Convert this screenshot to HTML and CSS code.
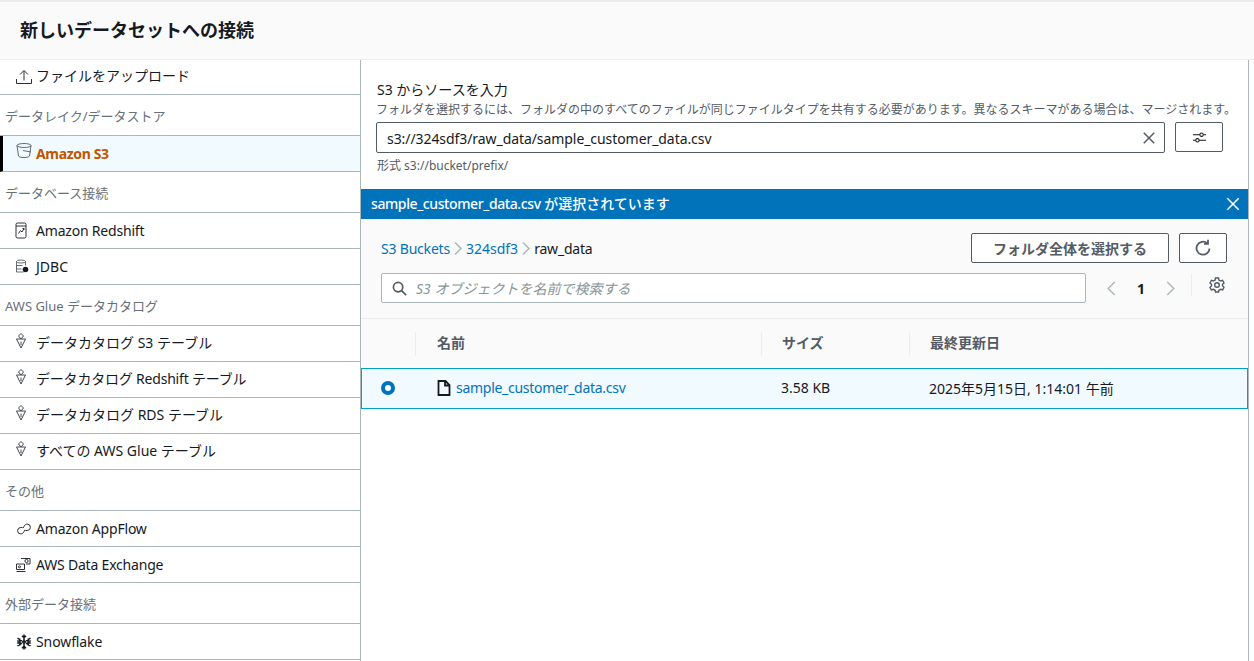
FILE: index.html
```html
<!DOCTYPE html>
<html lang="ja">
<head>
<meta charset="utf-8">
<title>新しいデータセットへの接続</title>
<link rel="stylesheet" href="styles.css">
</head>
<body>
<header class="top"><h1>新しいデータセットへの接続</h1></header>
<div class="layout">
  <nav class="side">
    <div class="item first"><svg class="ic" viewBox="0 0 16 16"><path d="M0.500 10v4.500h15V10M8 11.500V2M4 5.500L8 1.500l4 4"/></svg><span class="jp">ファイルをアップロード</span></div>
    <div class="head">データレイク/データストア</div>
    <div class="item active"><svg class="ic up" viewBox="0 0 16 16"><ellipse cx="8" cy="2.500" rx="7" ry="2"/><path d="M1 2.500l1.500 10.500c.5 1 2.500 1.500 5.500 1.500s5-.5 5.500-1.500L15 2.500M7 7.500l8 1.500"/></svg><span class="lat-b">Amazon S3</span></div>
    <div class="head">データベース接続</div>
    <div class="item"><svg class="ic" viewBox="0 0 16 16"><rect x="0" y="0" width="10" height="15" rx="1.500"/><path d="M0 3h10M2.500 10.500l2-3 1.500 1.500L8 5.500M6.500 5.500H8V7"/></svg><span class="lat">Amazon Redshift</span></div>
    <div class="item"><svg class="ic jd" viewBox="0 0 16 16"><ellipse cx="5" cy="2.500" rx="4.500" ry="1.500"/><path d="M.5 2.500v10.500h7M9.500 2.500v4M.5 6.500h6M.5 10h5"/><circle cx="9.500" cy="10.500" r="2.800" class="solid"/></svg><span>JDBC</span></div>
    <div class="head">AWS Glue データカタログ</div>
    <div class="item"><svg class="ic up gl" viewBox="0 0 16 16"><path d="M.5 6h9L5 15zM5 .5L7.500 3 5 6 2.500 3zM5 8.500v3.500"/></svg><span class="jp2">データカタログ S3 テーブル</span></div>
    <div class="item"><svg class="ic up gl" viewBox="0 0 16 16"><path d="M.5 6h9L5 15zM5 .5L7.500 3 5 6 2.500 3zM5 8.500v3.500"/></svg><span class="jp2 lat">データカタログ Redshift テーブル</span></div>
    <div class="item"><svg class="ic up gl" viewBox="0 0 16 16"><path d="M.5 6h9L5 15zM5 .5L7.500 3 5 6 2.500 3zM5 8.500v3.500"/></svg><span class="jp2">データカタログ RDS テーブル</span></div>
    <div class="item"><svg class="ic up gl" viewBox="0 0 16 16"><path d="M.5 6h9L5 15zM5 .5L7.500 3 5 6 2.500 3zM5 8.500v3.500"/></svg><span class="jp2">すべての AWS Glue テーブル</span></div>
    <div class="head">その他</div>
    <div class="item"><svg class="ic" viewBox="0 0 16 16"><path d="M6.500 6.500H4.800a3.200 3.200 0 0 0 0 6.400c1.400 0 2.300-.7 2.800-1.700L9 8.800M9.500 9.500h1.700a3.200 3.200 0 0 0 0-6.400c-1.400 0-2.300.7-2.800 1.700L7 7.200"/></svg><span class="lat">Amazon AppFlow</span></div>
    <div class="item"><svg class="ic" viewBox="0 0 16 16"><path d="M.5 14.500h9M.5 7h8v5.500h-8z"/><circle cx="3.500" cy="9.800" r="1"/><path d="M5 1.500h9v5.500h-4"/><circle cx="10.500" cy="4" r="1.600"/></svg><span class="lat">AWS Data Exchange</span></div>
    <div class="head">外部データ接続</div>
    <div class="item"><svg class="ic bold" viewBox="0 0 16 16"><path d="M8 .5V6M8 10v5.500M1.500 4.200L6 6.900M10 9.100l4.500 2.700M14.500 4.200L10 6.900M6 9.100l-4.500 2.700M6 1.800l2 2 2-2M6 14.200l2-2 2 2M1.200 7L4 7.200 3.500 4.500M14.800 7L12 7.200l.5-2.700M1.200 9L4 8.800l-.5 2.700M14.800 9L12 8.800l.5 2.700"/><path d="M8 6.500L9.500 8 8 9.500 6.500 8z"/></svg><span class="snow">Snowflake</span></div>
  </nav>
  <main class="main">
    <section class="source">
      <div class="label">S3 からソースを入力</div>
      <div class="hint">フォルダを選択するには、フォルダの中のすべてのファイルが同じファイルタイプを共有する必要があります。異なるスキーマがある場合は、マージされます。</div>
      <div class="input-row">
        <div class="field"><span class="path">s3://324sdf3/raw_data/sample_customer_data.csv</span><svg class="x" viewBox="0 0 16 16"><path d="M2 2l12 12M14 2L2 14"/></svg></div>
        <div class="cfg"><svg viewBox="0 0 16 16"><path d="M1 5h7.500M12 5h3M1 11h3M7.500 11H15"/><circle cx="10.200" cy="5" r="1.800"/><circle cx="5.800" cy="11" r="1.800"/></svg></div>
      </div>
      <div class="format">形式 s3://bucket/prefix/</div>
    </section>
    <div class="banner"><span><span class="lat-m">sample_customer_data.csv</span> が選択されています</span><svg viewBox="0 0 16 16"><path d="M1.500 1.500l13 13M14.500 1.500l-13 13"/></svg></div>
    <section class="browser">
      <div class="crumb-row">
        <div class="crumbs"><a class="lat">S3 Buckets</a><svg viewBox="0 0 8 13"><path d="M1 .5l6 6-6 6"/></svg><a>324sdf3</a><svg viewBox="0 0 8 13"><path d="M1 .5l6 6-6 6"/></svg><span class="lat">raw_data</span></div>
        <div class="btn">フォルダ全体を選択する</div>
        <div class="btn refresh"><svg viewBox="0 0 18 18"><path d="M15.500 9.500A6.500 6.500 0 1 1 13.200 4.200M14 .8v4H10"/></svg></div>
      </div>
      <div class="search-row">
        <div class="search"><svg viewBox="0 0 16 16"><circle cx="6.500" cy="6.500" r="5"/><path d="M10 10l5 5"/></svg><span>S3 オブジェクトを名前で検索する</span></div>
        <div class="pager">
          <svg viewBox="0 0 10 16"><path d="M9 1L2 8l7 7"/></svg>
          <b>1</b>
          <svg viewBox="0 0 10 16"><path d="M1 1l7 7-7 7"/></svg>
        </div>
        <div class="gear"><svg viewBox="0 0 16 16"><circle cx="8" cy="8" r="2.300"/><path d="M6.500 1h3l.4 2 1.700 1 2-.7 1.400 2.700-1.500 1.300v1.400L15 10.300 13.600 13l-2-.7-1.700 1-.4 1.700h-3l-.4-1.700-1.700-1-2 .7L1 10.300l1.500-1.300V7.300L1 6l1.400-2.700 2 .7 1.700-1z"/></svg></div>
      </div>
    </section>
    <div class="thead">
      <div class="cell sel"></div>
      <div class="cell name">名前</div>
      <div class="cell size">サイズ</div>
      <div class="cell date">最終更新日</div>
    </div>
    <div class="trow">
      <div class="tsel"><i class="radio"></i></div>
      <div class="tname"><svg viewBox="0 0 16 16"><path d="M2.500 1h7L13.500 5v10h-11zM9 1v4.500h4.500"/></svg><a class="lat-f">sample_customer_data.csv</a></div>
      <div class="tsize">3.58 KB</div>
      <div class="tdate">2025年5月15日, 1:14:01 午前</div>
    </div>
  </main>
</div>
</body>
</html>
```
FILE: styles.css
```css
* { box-sizing: border-box; }
html, body { margin: 0; height: 661px; overflow: hidden; background: #fff; }
body { font-family: "Noto Sans", "Noto Sans CJK JP", sans-serif; font-size: 14px; color: #16191f; }
svg { fill: none; stroke: currentColor; flex: none; display: block; overflow: visible; }

.top { height: 60px; background: #fafafa; border-top: 2px solid #eaeded; border-bottom: 1px solid #eaeded; display: flex; align-items: center; padding: 0 20px 2px; }
.top h1 { margin: 0; font-size: 18px; font-weight: 700; line-height: 24px; color: #16191f; }

.lat { letter-spacing: -0.2px; }
.lat-f { letter-spacing: -0.28px; }
.lat-m { letter-spacing: -0.4px; }
.lat-b { letter-spacing: -0.35px; }
.snow { letter-spacing: -0.1px; }
.path { letter-spacing: -0.07px; padding-top: 2px; }
.jp { padding-bottom: 2px; }
.jp2 { padding-bottom: 1px; }

.layout { display: flex; height: 601px; }
.side { width: 361px; flex: none; border-right: 1px solid #aab7b8; }
.item { height: 36px; border-bottom: 1px solid #aab7b8; display: flex; align-items: center; gap: 4px; padding-left: 16px; line-height: 20px; }
.item.first { height: 35px; }
.ic { width: 16px; height: 16px; stroke-width: 0.900; color: #16191f; }
.ic.up { transform: translateY(-3px); }
.ic.gl { color: #414750; stroke-width: 1; }
.ic.jd { color: #545b64; }
.ic.bold { stroke-width: 1.500; }
.solid { fill: #16191f; stroke: none; }
.head { height: 41px; border-bottom: 1px solid #aab7b8; display: flex; align-items: center; padding-left: 5px; font-size: 13px; color: #687078; }
.active { background: #f1faff; border-left: 3px solid #000; padding-left: 13px; color: #c05600; font-weight: 700; }
.active .ic { color: #545b64; }

.main { flex: none; width: 888px; border-right: 1px solid #aab7b8; }
.source { height: 129px; padding: 20px 16px 0 15px; }
.label { line-height: 20px; font-size: 14px; padding-left: 1px; }
.hint { font-size: 12px; line-height: 16px; color: #545b64; white-space: nowrap; margin-top: 2px; }
.input-row { display: flex; margin-top: 4px; gap: 10px; }
.field { width: 789px; height: 31px; border: 1px solid #545b64; border-radius: 2px; display: flex; align-items: center; justify-content: space-between; padding: 0 8px 0 10px; }
.x { width: 14px; height: 14px; stroke-width: 1.700; color: #545b64; }
.cfg { width: 48px; height: 30px; border: 1px solid #545b64; border-radius: 2px; display: flex; align-items: center; justify-content: center; }
.cfg svg { width: 15px; height: 15px; stroke-width: 1.100; }
.format { font-size: 12px; line-height: 16px; color: #545b64; margin-top: 5px; padding-left: 1px; }

.banner { height: 30px; background: #0073bb; color: #fff; display: flex; align-items: center; justify-content: space-between; padding: 0 8px 2px 10px; font-size: 14px; font-weight: 500; }
.banner svg { width: 14px; height: 14px; stroke-width: 1.800; margin-top: 2px; }

.browser { height: 100px; background: #fafafa; border-bottom: 1px solid #eaeded; padding: 14px 21px 0 20px; }
.crumb-row { display: flex; align-items: center; height: 30px; }
.crumbs { flex: 1; display: flex; align-items: center; gap: 4px; }
.crumbs a { color: #0073bb; }
.crumbs svg { width: 8px; height: 13px; color: #aab7b8; stroke-width: 1.500; }
.btn { height: 30px; width: 198px; border: 1px solid #545b64; border-radius: 2px; background: #fff; display: flex; align-items: center; justify-content: center; font-weight: 700; color: #545b64; }
.refresh { width: 48px; margin-left: 10px; }
.refresh svg { width: 18px; height: 18px; stroke-width: 1.800; }
.search-row { display: flex; align-items: center; margin-top: 10px; height: 30px; }
.search { width: 705px; height: 30px; border: 1px solid #aab7b8; border-radius: 2px; background: #fff; display: flex; align-items: center; gap: 9px; padding-left: 10px; color: #879596; font-style: italic; font-size: 14px; }
.search svg { width: 15px; height: 15px; color: #545b64; stroke-width: 1.800; }
.pager { width: 85px; margin-left: 20px; display: flex; align-items: center; justify-content: space-between; padding-right: 15px; }
.pager svg { width: 10px; height: 15px; color: #aab7b8; stroke-width: 1.500; }
.pager b { font-size: 14px; }
.gear { border-left: 1px solid #eaeded; height: 22px; padding: 3px 0 0 18px; margin-top: -6px; }
.gear svg { width: 16px; height: 16px; color: #545b64; stroke-width: 1.400; transform: translateX(-1px); }

.thead { height: 49px; background: #fafafa; display: flex; align-items: center; font-weight: 700; color: #545b64; }
.cell { height: 24px; display: flex; align-items: center; padding: 0 0 4px 20px; border-left: 1px solid #eaeded; }
.sel { width: 55px; border-left: 0; border-right: 1px solid #eaeded; padding: 0; }
.name { width: 345px; border-left: 0; padding-left: 21px; }
.size { width: 148px; }
.date { flex: 1; }
.trow { height: 41px; background: #f1faff; border: 1px solid #00a1c9; display: flex; align-items: center; padding-bottom: 2px; }
.tsel { width: 74px; padding-left: 19px; }
.radio { display: block; width: 14px; height: 14px; border-radius: 50%; border: 4px solid #0073bb; background: #fff; }
.tname { width: 345px; display: flex; align-items: center; gap: 4px; color: #0073bb; }
.tname svg { width: 16px; height: 16px; color: #16191f; stroke-width: 1.800; }
.tsize { width: 148px; }
```
